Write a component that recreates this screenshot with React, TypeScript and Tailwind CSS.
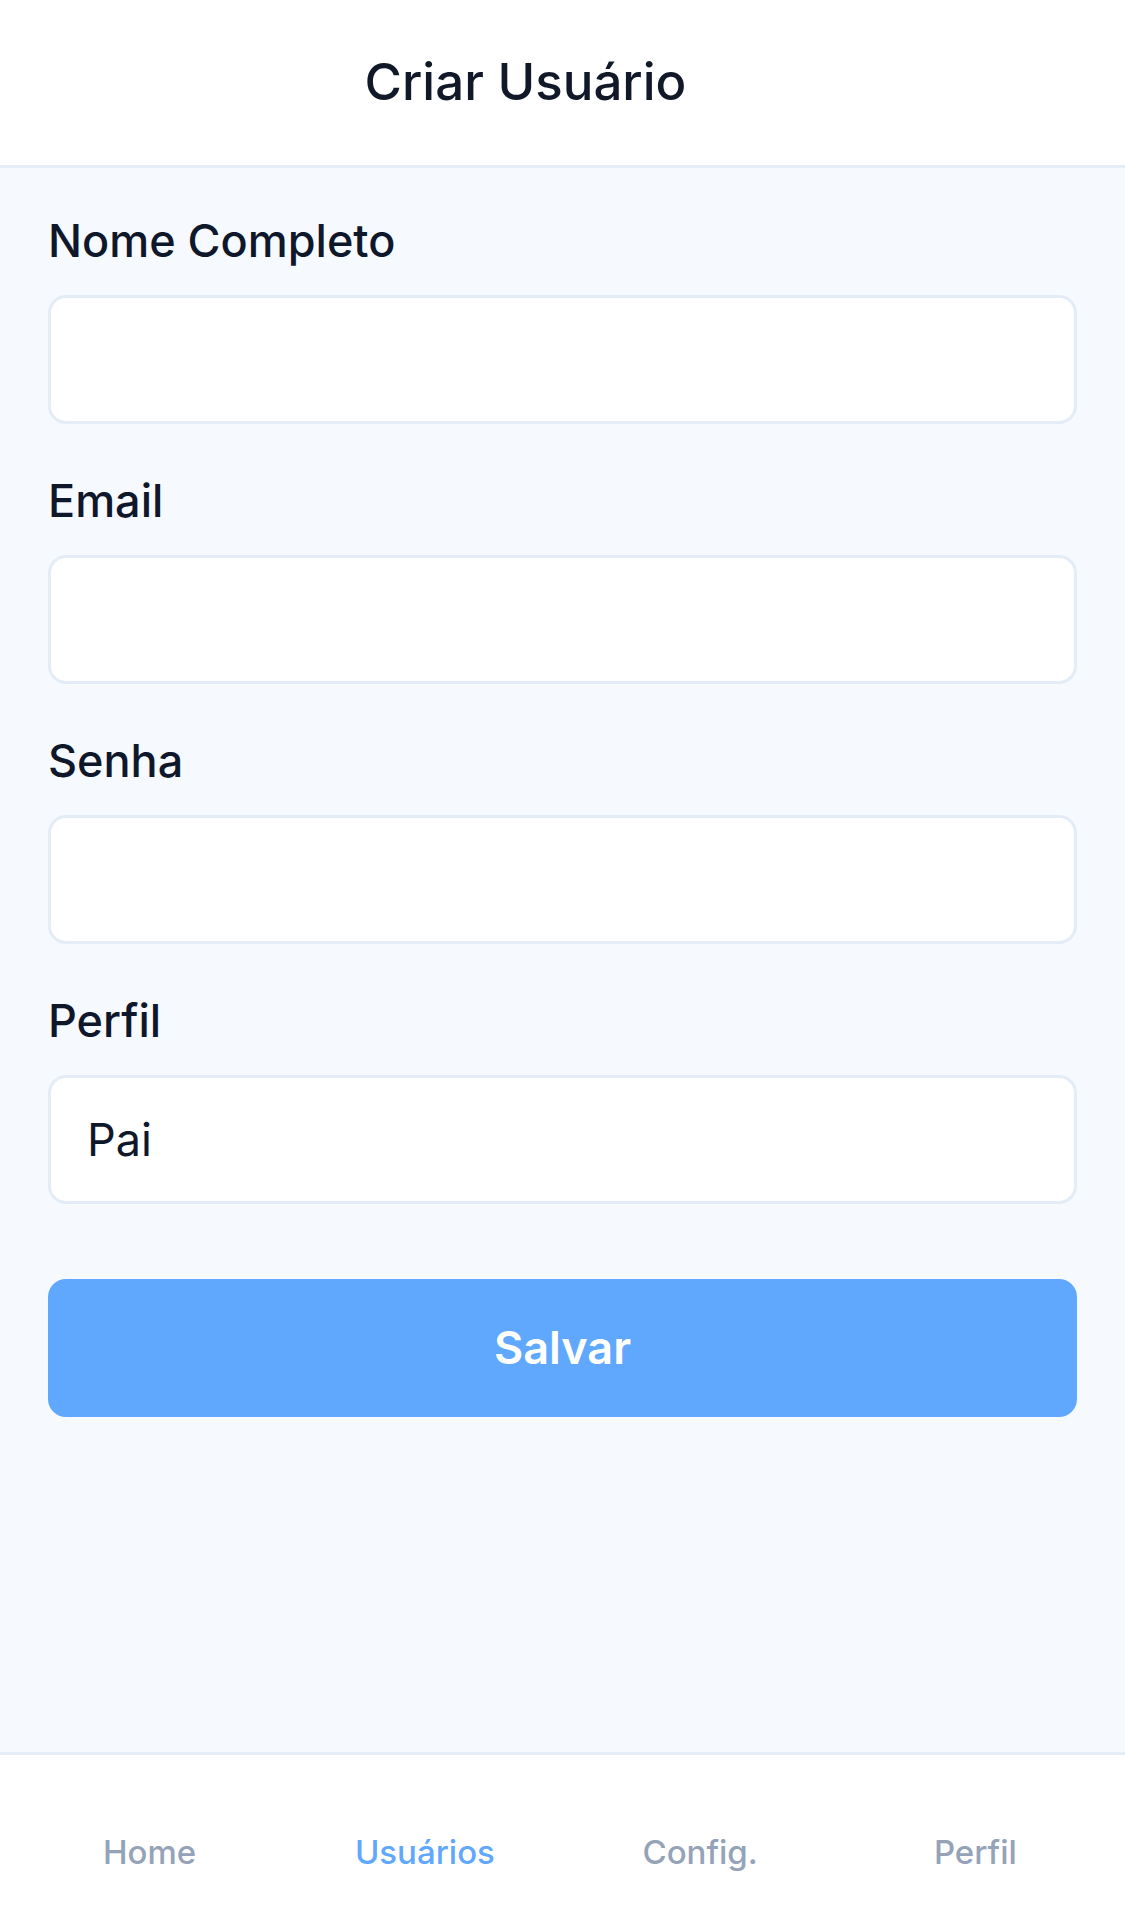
import React from "react";

const font = { fontFamily: "Inter, 'Noto Sans', sans-serif" };

function Field({ label, value }: { label: string; value?: string }) {
  return (
    <div className="mb-[47px] flex flex-col">
      <label className="mb-[24px] text-[45px] font-medium leading-[60px] text-[#0f172a]">{label}</label>
      <div className="flex h-[129px] items-center rounded-[18px] border-[3px] border-[#e4ecf6] bg-white px-[36px] text-[45px] text-[#0f172a]">
        {value}
      </div>
    </div>
  );
}

export default function App() {
  return (
    <div className="flex h-[1932px] w-[1125px] flex-col bg-[#f6f9fe]" style={font}>
      <header className="flex h-[168px] shrink-0 items-center justify-center border-b-[3px] border-[#e4ecf6] bg-white pr-[74px]">
        <h1 className="text-[51px] font-medium text-[#111827]">Criar Usuário</h1>
      </header>
      <main className="flex flex-1 flex-col px-[48px] pt-[43px]">
        <Field label="Nome Completo" />
        <Field label="Email" />
        <Field label="Senha" />
        <Field label="Perfil" value="Pai" />
        <button className="mt-[28px] flex h-[138px] items-center justify-center rounded-[18px] bg-[#5fa8fd] text-[45px] font-semibold text-white">
          Salvar
        </button>
      </main>
      <nav className="grid h-[180px] shrink-0 grid-cols-4 items-center border-t-[3px] border-[#e4ecf6] bg-white px-[12px] pt-[18px] text-[33px] font-medium">
        <span className="text-center text-[#94a3b8]">Home</span>
        <span className="text-center text-[#5fa8fd]">Usuários</span>
        <span className="text-center text-[#94a3b8]">Config.</span>
        <span className="text-center text-[#94a3b8]">Perfil</span>
      </nav>
    </div>
  );
}
